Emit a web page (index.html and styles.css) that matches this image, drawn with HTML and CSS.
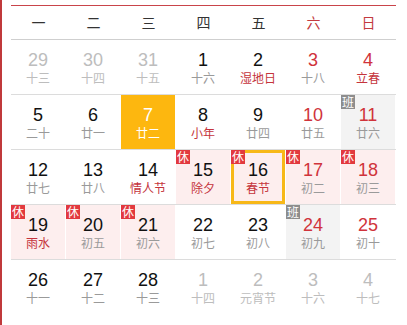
FILE: index.html
```html
<!DOCTYPE html>
<html lang="zh">
<head>
<meta charset="utf-8">
<link rel="stylesheet" href="styles.css">
</head>
<body>
<div class="page">
  <div class="cal">
    <div class="head">
      <div>一</div><div>二</div><div>三</div><div>四</div><div>五</div><div class="we">六</div><div class="we">日</div>
    </div>
    <div class="row">
      <div class="cell other"><span class="num">29</span><span class="lun">十三</span></div>
      <div class="cell other"><span class="num">30</span><span class="lun">十四</span></div>
      <div class="cell other"><span class="num">31</span><span class="lun">十五</span></div>
      <div class="cell"><span class="num">1</span><span class="lun">十六</span></div>
      <div class="cell"><span class="num">2</span><span class="lun fest">湿地日</span></div>
      <div class="cell weekend"><span class="num">3</span><span class="lun">十八</span></div>
      <div class="cell weekend"><span class="num">4</span><span class="lun fest">立春</span></div>
    </div>
    <div class="row">
      <div class="cell"><span class="num">5</span><span class="lun">二十</span></div>
      <div class="cell"><span class="num">6</span><span class="lun">廿一</span></div>
      <div class="cell today"><span class="num">7</span><span class="lun">廿二</span></div>
      <div class="cell"><span class="num">8</span><span class="lun fest">小年</span></div>
      <div class="cell"><span class="num">9</span><span class="lun">廿四</span></div>
      <div class="cell weekend"><span class="num">10</span><span class="lun">廿五</span></div>
      <div class="cell weekend work"><span class="badge ban">班</span><span class="num">11</span><span class="lun">廿六</span></div>
    </div>
    <div class="row">
      <div class="cell"><span class="num">12</span><span class="lun">廿七</span></div>
      <div class="cell"><span class="num">13</span><span class="lun">廿八</span></div>
      <div class="cell"><span class="num">14</span><span class="lun fest">情人节</span></div>
      <div class="cell rest"><span class="badge xiu">休</span><span class="num">15</span><span class="lun fest">除夕</span></div>
      <div class="cell rest sel"><span class="badge xiu">休</span><span class="num">16</span><span class="lun fest">春节</span></div>
      <div class="cell rest weekend"><span class="badge xiu">休</span><span class="num">17</span><span class="lun">初二</span></div>
      <div class="cell rest weekend"><span class="badge xiu">休</span><span class="num">18</span><span class="lun">初三</span></div>
    </div>
    <div class="row">
      <div class="cell rest"><span class="badge xiu">休</span><span class="num">19</span><span class="lun fest">雨水</span></div>
      <div class="cell rest"><span class="badge xiu">休</span><span class="num">20</span><span class="lun">初五</span></div>
      <div class="cell rest"><span class="badge xiu">休</span><span class="num">21</span><span class="lun">初六</span></div>
      <div class="cell"><span class="num">22</span><span class="lun">初七</span></div>
      <div class="cell"><span class="num">23</span><span class="lun">初八</span></div>
      <div class="cell weekend work"><span class="badge ban">班</span><span class="num">24</span><span class="lun">初九</span></div>
      <div class="cell weekend"><span class="num">25</span><span class="lun">初十</span></div>
    </div>
    <div class="row last">
      <div class="cell"><span class="num">26</span><span class="lun">十一</span></div>
      <div class="cell"><span class="num">27</span><span class="lun">十二</span></div>
      <div class="cell"><span class="num">28</span><span class="lun">十三</span></div>
      <div class="cell other"><span class="num">1</span><span class="lun">十四</span></div>
      <div class="cell other"><span class="num">2</span><span class="lun">元宵节</span></div>
      <div class="cell other"><span class="num">3</span><span class="lun">十六</span></div>
      <div class="cell other"><span class="num">4</span><span class="lun">十七</span></div>
    </div>
  </div>
</div>
</body>
</html>
```
FILE: styles.css
```css
html, body {
  margin: 0;
  padding: 0;
  background: #fff;
}
.page {
  width: 407px;
  height: 325px;
  box-sizing: border-box;
  border-left: 2px solid #c0393b;
  padding: 5px 0 0 9px;
  font-family: "Liberation Sans", "Noto Sans CJK SC", sans-serif;
  overflow: hidden;
}
.cal {
  width: 385px;
}
.head {
  display: grid;
  grid-template-columns: repeat(7, 55px);
  height: 33px;
  line-height: 33px;
  border-top: 1px solid #c9444a;
  border-bottom: 1px solid #cfcfcf;
  font-family: "Noto Sans CJK SC", sans-serif;
  font-size: 14px;
  color: #333;
  text-align: center;
}
.head .we {
  color: #c33a40;
}
.row {
  display: grid;
  grid-template-columns: repeat(7, 54px);
  column-gap: 1px;
  height: 54px;
  border-bottom: 1px solid #dcdcdc;
}
.row.last {
  border-bottom: none;
}
.cell {
  position: relative;
  display: flex;
  flex-direction: column;
  align-items: center;
  padding-top: 10px;
  box-sizing: border-box;
  height: 54px;
}
.num {
  font-family: "Liberation Sans", sans-serif;
  font-size: 18px;
  line-height: 20px;
  color: #111;
}
.lun {
  font-family: "Noto Sans CJK SC", sans-serif;
  font-size: 12px;
  line-height: 16px;
  color: #9a9a9a;
}
.lun.fest {
  color: #c5343c;
}
.weekend .num {
  color: #d0333b;
}
.other .num,
.other .lun {
  color: #bdbdbd;
}
.today {
  background: #fdb70f;
}
.today .num,
.today .lun {
  color: #fff;
}
.rest {
  background: #fdeeee;
}
.work {
  background: #f3f3f3;
}
.sel {
  box-shadow: inset 0 0 0 3px #f7b818;
}
.badge {
  position: absolute;
  left: 0;
  top: 0;
  width: 14px;
  height: 14px;
  font-family: "Noto Sans CJK SC", sans-serif;
  font-size: 12px;
  line-height: 14px;
  text-align: center;
  color: #fff;
}
.xiu {
  background: #e2393e;
}
.ban {
  background: #8d8d8d;
}
```
